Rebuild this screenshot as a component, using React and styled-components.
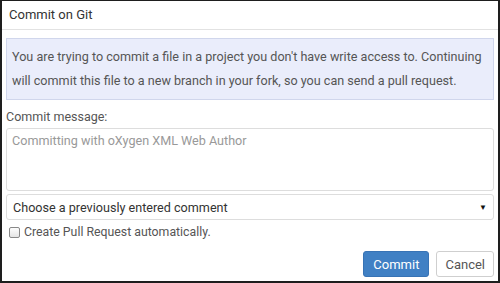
import styled, { createGlobalStyle } from "styled-components";

const GlobalStyle = createGlobalStyle`
  html, body {
    margin: 0;
    padding: 0;
    background: #fff;
  }
  body {
    font-family: Roboto, "Liberation Sans", sans-serif;
  }
`;

const Dialog = styled.div`
  width: 500px;
  height: 283px;
  box-sizing: border-box;
  border: 2px solid #1e1e1e;
  border-top-width: 1px;
  display: flex;
  flex-direction: column;
  background: #fff;
  color: #444;
  overflow: hidden;
`;

const Header = styled.div`
  flex-shrink: 0;
  height: 29px;
  box-sizing: border-box;
  padding: 0 0 2px 7px;
  display: flex;
  align-items: center;
  font-size: 13px;
  color: #333;
  border-bottom: 1px solid #e2e2e2;
`;

const Body = styled.div`
  flex: 1;
  padding: 8px 4px 4px 4px;
  display: flex;
  flex-direction: column;
`;

const Notice = styled.div`
  flex-shrink: 0;
  background: #eaedfb;
  border: 1px solid #d0d6ec;
  padding: 6px 5px 6px 5px;
  font-size: 12.6px;
  line-height: 24px;
  color: #555;
`;

const Label = styled.div`
  margin-top: 9px;
  font-size: 12.5px;
  line-height: 15px;
  color: #555;
`;

const MessageBox = styled.textarea`
  flex-shrink: 0;
  margin-top: 4px;
  height: 63px;
  box-sizing: border-box;
  border: 1px solid #ddd;
  border-radius: 3px;
  padding: 4px 5px;
  resize: none;
  font-family: Roboto, "Liberation Sans", sans-serif;
  font-size: 12.6px;
  &::placeholder {
    color: #999;
  }
`;

const Select = styled.div`
  flex-shrink: 0;
  margin-top: 3px;
  height: 26px;
  box-sizing: border-box;
  border: 1px solid #ddd;
  border-radius: 3px;
  padding: 0 6px 0 6px;
  display: flex;
  align-items: center;
  justify-content: space-between;
  font-size: 12.6px;
  color: #333;
`;

const Arrow = styled.span`
  font-size: 8px;
  color: #111;
`;

const CheckRow = styled.label`
  margin-top: 5px;
  display: flex;
  align-items: center;
  gap: 4px;
  font-size: 12.3px;
  color: #555;
`;

const Box = styled.span`
  width: 9px;
  height: 9px;
  margin-left: 3px;
  border: 1px solid #888;
  border-radius: 2px;
  background: linear-gradient(#fdfdfd, #e4e4e4);
`;

const Footer = styled.div`
  margin-top: auto;
  display: flex;
  justify-content: flex-end;
  gap: 7px;
`;

const Button = styled.button`
  height: 26px;
  box-sizing: border-box;
  padding: 0 ${(p) => (p.$primary ? "9px" : "8px")};
  border-radius: 3px;
  font-family: Roboto, "Liberation Sans", sans-serif;
  font-size: 13px;
  border: 1px solid ${(p) => (p.$primary ? "#3873b5" : "#cfcfcf")};
  background: ${(p) => (p.$primary ? "#4080c4" : "#fff")};
  color: ${(p) => (p.$primary ? "#fff" : "#555")};
`;

export default function App() {
  return (
    <>
      <GlobalStyle />
      <Dialog>
        <Header>Commit on Git</Header>
        <Body>
          <Notice>
            You are trying to commit a file in a project you don't have write
            access to. Continuing will commit this file to a new branch in your
            fork, so you can send a pull request.
          </Notice>
          <Label>Commit message:</Label>
          <MessageBox placeholder="Committing with oXygen XML Web Author" />
          <Select>
            <span>Choose a previously entered comment</span>
            <Arrow>▼</Arrow>
          </Select>
          <CheckRow>
            <Box />
            Create Pull Request automatically.
          </CheckRow>
          <Footer>
            <Button $primary>Commit</Button>
            <Button>Cancel</Button>
          </Footer>
        </Body>
      </Dialog>
    </>
  );
}
